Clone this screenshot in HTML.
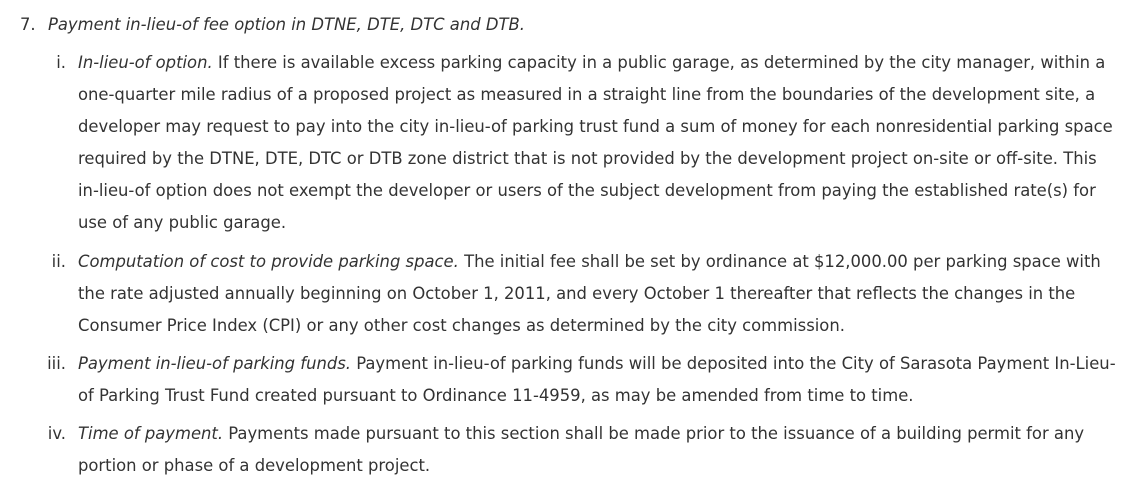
<!DOCTYPE html>
<html><head><style>
body{margin:0;background:#fff;color:#333;font-family:"DejaVu Sans","Liberation Sans",sans-serif;font-size:16.4px;}
.l{position:absolute;white-space:nowrap;line-height:32px;height:32px;}
.n{position:absolute;white-space:nowrap;line-height:32px;text-align:right;width:60px;}
i{font-style:italic}
</style></head><body>
<div class="l" style="left:20px;top:9px"><span>7.</span></div>
<div class="l" style="left:48px;top:9px"><i>Payment in-lieu-of fee option in DTNE, DTE, DTC and DTB.</i></div>

<div class="n" style="left:6px;top:47px">i.</div>
<div class="l" style="left:78px;top:47px"><i>In-lieu-of option.</i> If there is available excess parking capacity in a public garage, as determined by the city manager, within a</div>
<div class="l" style="left:78px;top:79px">one-quarter mile radius of a proposed project as measured in a straight line from the boundaries of the development site, a</div>
<div class="l" style="left:78px;top:111px">developer may request to pay into the city in-lieu-of parking trust fund a sum of money for each nonresidential parking space</div>
<div class="l" style="left:78px;top:143px">required by the DTNE, DTE, DTC or DTB zone district that is not provided by the development project on-site or off-site. This</div>
<div class="l" style="left:78px;top:175px">in-lieu-of option does not exempt the developer or users of the subject development from paying the established rate(s) for</div>
<div class="l" style="left:78px;top:207px">use of any public garage.</div>

<div class="n" style="left:6px;top:246px">ii.</div>
<div class="l" style="left:78px;top:246px"><i>Computation of cost to provide parking space.</i> The initial fee shall be set by ordinance at $12,000.00 per parking space with</div>
<div class="l" style="left:78px;top:278px">the rate adjusted annually beginning on October 1, 2011, and every October 1 thereafter that reflects the changes in the</div>
<div class="l" style="left:78px;top:310px">Consumer Price Index (CPI) or any other cost changes as determined by the city commission.</div>

<div class="n" style="left:6px;top:348px">iii.</div>
<div class="l" style="left:78px;top:348px"><i>Payment in-lieu-of parking funds.</i> Payment in-lieu-of parking funds will be deposited into the City of Sarasota Payment In-Lieu-</div>
<div class="l" style="left:78px;top:380px">of Parking Trust Fund created pursuant to Ordinance 11-4959, as may be amended from time to time.</div>

<div class="n" style="left:6px;top:418px">iv.</div>
<div class="l" style="left:78px;top:418px"><i>Time of payment.</i> Payments made pursuant to this section shall be made prior to the issuance of a building permit for any</div>
<div class="l" style="left:78px;top:450px">portion or phase of a development project.</div>
</body></html>
